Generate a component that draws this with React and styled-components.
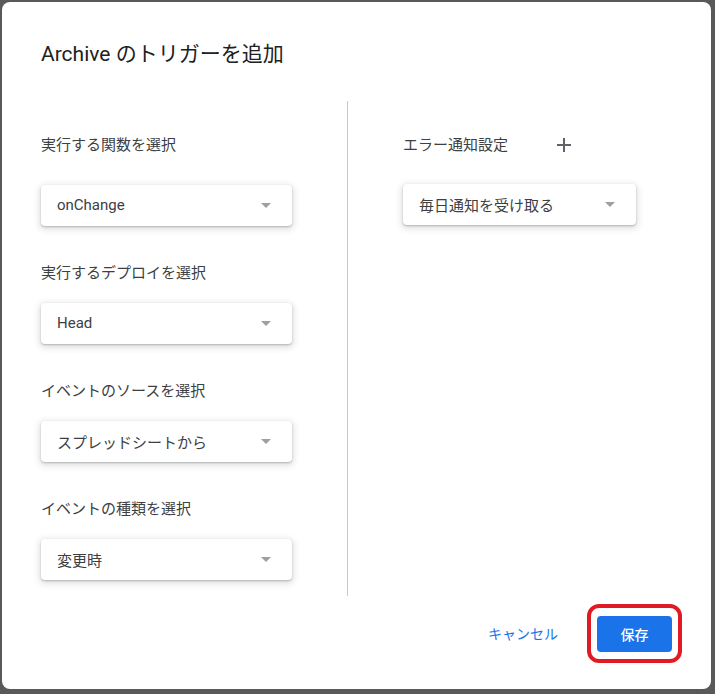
import React from "react";
import styled, { createGlobalStyle } from "styled-components";

const GlobalStyle = createGlobalStyle`
  html, body {
    margin: 0;
    padding: 0;
    background: #595959;
  }
  body {
    font-family: Roboto, "Noto Sans CJK JP", sans-serif;
    -webkit-font-smoothing: antialiased;
  }
  #root {
    padding: 2px;
  }
`;

const Field = ({ label, value, width, first }) => (
  <FieldGroup>
    <Label $gap={first ? 30 : 20}>{label}</Label>
    <Select $width={width}>
      <span>{value}</span>
      <Arrow />
    </Select>
  </FieldGroup>
);

const App = () => {
  return (
    <>
      <GlobalStyle />
      <Dialog>
        <Header>
          <Title>Archive のトリガーを追加</Title>
        </Header>
        <Columns>
          <LeftColumn>
            <Field first label="実行する関数を選択" value="onChange" width={251} />
            <Field label="実行するデプロイを選択" value="Head" width={251} />
            <Field label="イベントのソースを選択" value="スプレッドシートから" width={251} />
            <Field label="イベントの種類を選択" value="変更時" width={251} />
          </LeftColumn>
          <RightColumn>
            <LabelRow>
              <Label $gap={0}>エラー通知設定</Label>
              <AddButton aria-label="追加">
                <svg width="14" height="14" viewBox="0 0 14 14">
                  <path d="M7 0v14M0 7h14" stroke="#5f6368" strokeWidth="2" />
                </svg>
              </AddButton>
            </LabelRow>
            <Select $width={233}>
              <span>毎日通知を受け取る</span>
              <Arrow />
            </Select>
          </RightColumn>
        </Columns>
        <Footer>
          <Actions>
            <CancelButton>キャンセル</CancelButton>
            <Highlight>
              <SaveButton>保存</SaveButton>
            </Highlight>
          </Actions>
        </Footer>
      </Dialog>
    </>
  );
};

const Dialog = styled.div`
  width: 709px;
  height: 687px;
  background: #fff;
  border-radius: 8px;
  display: flex;
  flex-direction: column;
  box-sizing: border-box;
  overflow: hidden;
`;

const Header = styled.div`
  padding: 38px 39px 33px;
`;

const Title = styled.h1`
  margin: 0;
  font-size: 21px;
  line-height: 28px;
  font-weight: 400;
  color: #202124;
`;

const Columns = styled.div`
  display: flex;
  height: 495px;
`;

const LeftColumn = styled.div`
  width: 346px;
  box-sizing: border-box;
  border-right: 1px solid #c8c8c8;
  padding: 34px 0 0 39px;
`;

const RightColumn = styled.div`
  flex: 1;
  padding: 34px 0 0 55px;
`;

const FieldGroup = styled.div`
  margin-bottom: 37px;
`;

const Label = styled.div`
  font-size: 15px;
  line-height: 20px;
  color: #3c4043;
  margin-bottom: ${({ $gap }) => $gap}px;
`;

const LabelRow = styled.div`
  display: flex;
  align-items: center;
  gap: 49px;
  margin-bottom: 29px;
`;

const AddButton = styled.button`
  border: none;
  background: none;
  padding: 0;
  width: 14px;
  height: 14px;
  display: flex;
  cursor: pointer;
`;

const Select = styled.div`
  width: ${({ $width }) => $width}px;
  height: 41px;
  box-sizing: border-box;
  border-radius: 4px;
  background: #fff;
  box-shadow: 0 1px 2px rgba(60, 64, 67, 0.3),
    0 2px 6px 2px rgba(60, 64, 67, 0.15);
  display: flex;
  align-items: center;
  justify-content: space-between;
  padding: 0 21px 1px 16px;
  font-size: 15px;
  color: #3c4043;
`;

const Arrow = styled.span`
  width: 0;
  height: 0;
  border-left: 5px solid transparent;
  border-right: 5px solid transparent;
  border-top: 5px solid #9aa0a6;
`;

const Footer = styled.div`
  flex: 1;
  display: flex;
  justify-content: flex-end;
  align-items: flex-start;
  padding: 8px 29px 0 0;
`;

const Actions = styled.div`
  display: flex;
  align-items: center;
  gap: 29px;
`;

const CancelButton = styled.button`
  border: none;
  background: none;
  padding: 0;
  font-family: inherit;
  font-size: 14px;
  line-height: 20px;
  color: #1a73e8;
  cursor: pointer;
`;

const Highlight = styled.div`
  border: 4px solid #e01b24;
  border-radius: 12px;
  padding: 8px 6px 7px;
  display: flex;
`;

const SaveButton = styled.button`
  width: 75px;
  height: 36px;
  border: none;
  border-radius: 4px;
  background: #1a73e8;
  color: #fff;
  font-family: inherit;
  font-size: 14px;
  font-weight: 500;
  cursor: pointer;
`;

export default App;
